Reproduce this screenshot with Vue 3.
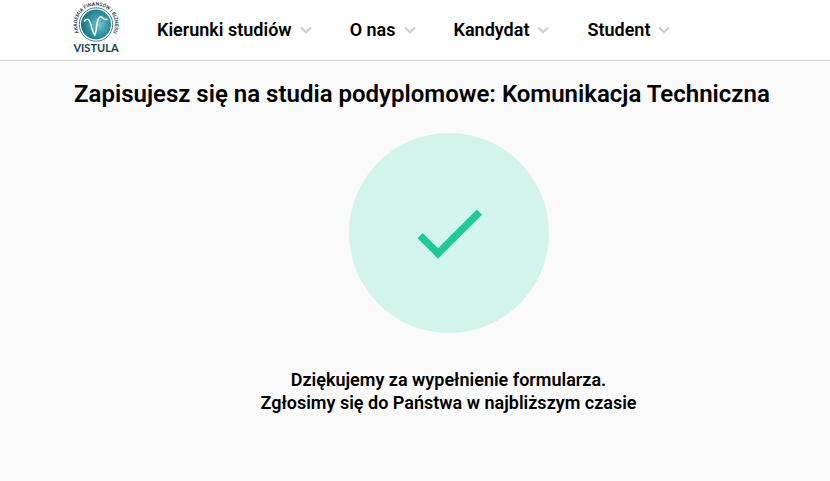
<script setup>
const menu = ['Kierunki studiów', 'O nas', 'Kandydat', 'Student']
</script>

<template>
  <div class="page">
    <header class="header">
      <a class="logo" href="#" aria-label="Vistula">
        <svg width="46" height="54" viewBox="0 0 46 54" aria-hidden="true">
          <defs>
            <radialGradient id="disc" cx="0.6" cy="0.5" r="0.62">
              <stop offset="0" stop-color="#7cc6cc" />
              <stop offset="0.45" stop-color="#3a9ca8" />
              <stop offset="1" stop-color="#157182" />
            </radialGradient>
            <path id="ring" d="M7.500 34.600A19 19 0 1 1 38.500 34.600" />
          </defs>
          <circle cx="23" cy="23.500" r="16.700" fill="none" stroke="#3b7f8c" stroke-width="1" />
          <circle cx="23" cy="23.500" r="15" fill="url(#disc)" />
          <path d="M11 20.500C13 17.500 15.500 17.500 17 21C18.500 25 19.500 31 21.800 34C24.500 29 22.500 19 27 16C29.500 14.500 30.500 20.500 34.500 18" fill="none" stroke="#e9f7f7" stroke-width="1.600" />
          <text class="motto"><textPath href="#ring" startOffset="50%" text-anchor="middle">AKADEMIA FINANSÓW I BIZNESU</textPath></text>
          <text class="brand" x="23" y="51" text-anchor="middle">VISTULA</text>
        </svg>
      </a>
      <nav class="menu">
        <a v-for="item in menu" :key="item" class="item" href="#">
          {{ item }}
          <svg class="chevron" width="12" height="8" viewBox="0 0 12 8" aria-hidden="true">
            <path d="M1 1.500L6 6.200L11 1.500" fill="none" stroke="#d0d0d0" stroke-width="2.400" />
          </svg>
        </a>
      </nav>
    </header>
    <main class="content">
      <h1 class="title">Zapisujesz się na studia podyplomowe: Komunikacja Techniczna</h1>
      <div class="badge">
        <svg width="88" height="88" viewBox="0 0 24 24" aria-hidden="true">
          <path d="M9 16.170L4.830 12l-1.420 1.410L9 19 21 7l-1.410-1.410z" fill="#20c997" />
        </svg>
      </div>
      <p class="message">
        Dziękujemy za wypełnienie formularza.<br />
        Zgłosimy się do Państwa w najbliższym czasie
      </p>
    </main>
  </div>
</template>

<style>
body {
  margin: 0;
  background: #fafafa;
}
</style>

<style scoped>
.page {
  font-family: Roboto, "Liberation Sans", sans-serif;
  font-weight: 600;
  color: #000;
}
.header {
  display: flex;
  align-items: center;
  box-sizing: border-box;
  height: 61px;
  padding: 0 7px 0 73px;
  background: #fff;
  border-bottom: 1px solid #d2d2d2;
}
.logo {
  display: flex;
  margin-bottom: 4px;
}
.motto {
  font: 600 5px Roboto, sans-serif;
  fill: #123f4c;
}
.brand {
  font: 700 11px Lato, sans-serif;
  fill: #0f3f4d;
}
.menu {
  display: flex;
  gap: 38px;
  margin-left: 38px;
}
.item {
  display: flex;
  align-items: center;
  gap: 8px;
  font-size: 18px;
  line-height: 24px;
  color: #000;
  text-decoration: none;
  white-space: nowrap;
}
.content {
  padding: 17px 7px 0 74px;
}
.title {
  margin: 0;
  font-size: 24px;
  line-height: 32px;
  font-weight: 600;
}
.badge {
  display: flex;
  align-items: center;
  justify-content: center;
  width: 200px;
  height: 200px;
  margin: 23px auto 0;
  border-radius: 50%;
  background: #d3f4ea;
}
.message {
  margin: 35px 0 0;
  font-size: 18px;
  line-height: 23px;
  text-align: center;
}
</style>
